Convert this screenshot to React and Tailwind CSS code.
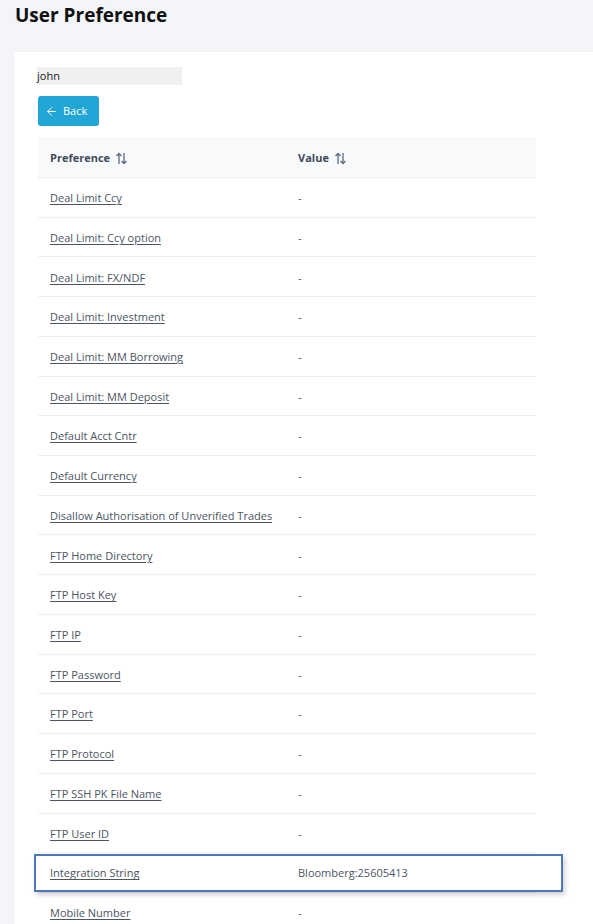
import { ArrowLeft } from "lucide-react";

const rows = [
    ["Deal Limit Ccy", "-"],
    ["Deal Limit: Ccy option", "-"],
    ["Deal Limit: FX/NDF", "-"],
    ["Deal Limit: Investment", "-"],
    ["Deal Limit: MM Borrowing", "-"],
    ["Deal Limit: MM Deposit", "-"],
    ["Default Acct Cntr", "-"],
    ["Default Currency", "-"],
    ["Disallow Authorisation of Unverified Trades", "-"],
    ["FTP Home Directory", "-"],
    ["FTP Host Key", "-"],
    ["FTP IP", "-"],
    ["FTP Password", "-"],
    ["FTP Port", "-"],
    ["FTP Protocol", "-"],
    ["FTP SSH PK File Name", "-"],
    ["FTP User ID", "-"],
    ["Integration String", "Bloomberg:25605413", true],
    ["Mobile Number", "-"],
];

function SortIcon() {
    return (
        <svg width="13" height="13" viewBox="0 0 13 13" className="ml-[5px] text-[#5b6b80]" fill="none" stroke="currentColor" strokeWidth="1.3">
            <path d="M4 12V1.5M1.5 4L4 1.5L6.5 4" />
            <path d="M9 1v10.5M6.5 9L9 11.5L11.5 9" />
        </svg>
    );
}

export default function App() {
    return (
        <div className="min-h-screen bg-[#f3f5f8] font-['Open_Sans',sans-serif] overflow-hidden">
            <h1 className="pl-[15px] pt-[1px] h-[52px] text-[19px] font-bold text-[#111] leading-[28px]">
                User Preference
            </h1>
            <div className="ml-[14px] bg-white min-h-[872px] pl-[24px] pt-[15px] shadow-[0_0_2px_rgba(0,0,0,0.06)]">
                <div className="w-[145px] h-[18px] bg-[#f0f0f0] text-[11px] leading-[18px] text-[#222] -ml-[1px]">
                    john
                </div>
                <button className="mt-[11px] flex items-center gap-[5px] h-[30px] w-[61px] pl-[7px] rounded-[3px] bg-[#22a6d6] text-white text-[11px]">
                    <ArrowLeft size={13} strokeWidth={1.8} />
                    Back
                </button>
                <div className="relative mt-[11px] w-[498px]">
                    <div className="flex h-[41px] items-center pt-[2px] bg-[#f8f9fa] border-b border-[#eceef0] text-[11px] font-bold text-[#3f4a5a]">
                        <div className="w-[248px] pl-[12px] flex items-center">
                            Preference
                            <SortIcon />
                        </div>
                        <div className="pl-[12px] flex items-center">
                            Value
                            <SortIcon />
                        </div>
                    </div>
                    {rows.map(([name, value, hl]) => (
                        <div key={name} className="relative flex h-[39.72px] items-center pt-[2px] border-b border-[#eceef0] text-[11px] text-[#4b5563]">
                            <div className="w-[248px] pl-[12px]">
                                <a href="#" className="underline underline-offset-[2px]">{name}</a>
                            </div>
                            <div className="pl-[12px]">{value}</div>
                            {hl && (
                                <div className="absolute left-[-4px] top-[1px] w-[529px] h-[38px] border-2 border-[#4a7ab8] shadow-[2px_3px_5px_rgba(0,0,0,0.18)]" />
                            )}
                        </div>
                    ))}
                </div>
            </div>
        </div>
    );
}
